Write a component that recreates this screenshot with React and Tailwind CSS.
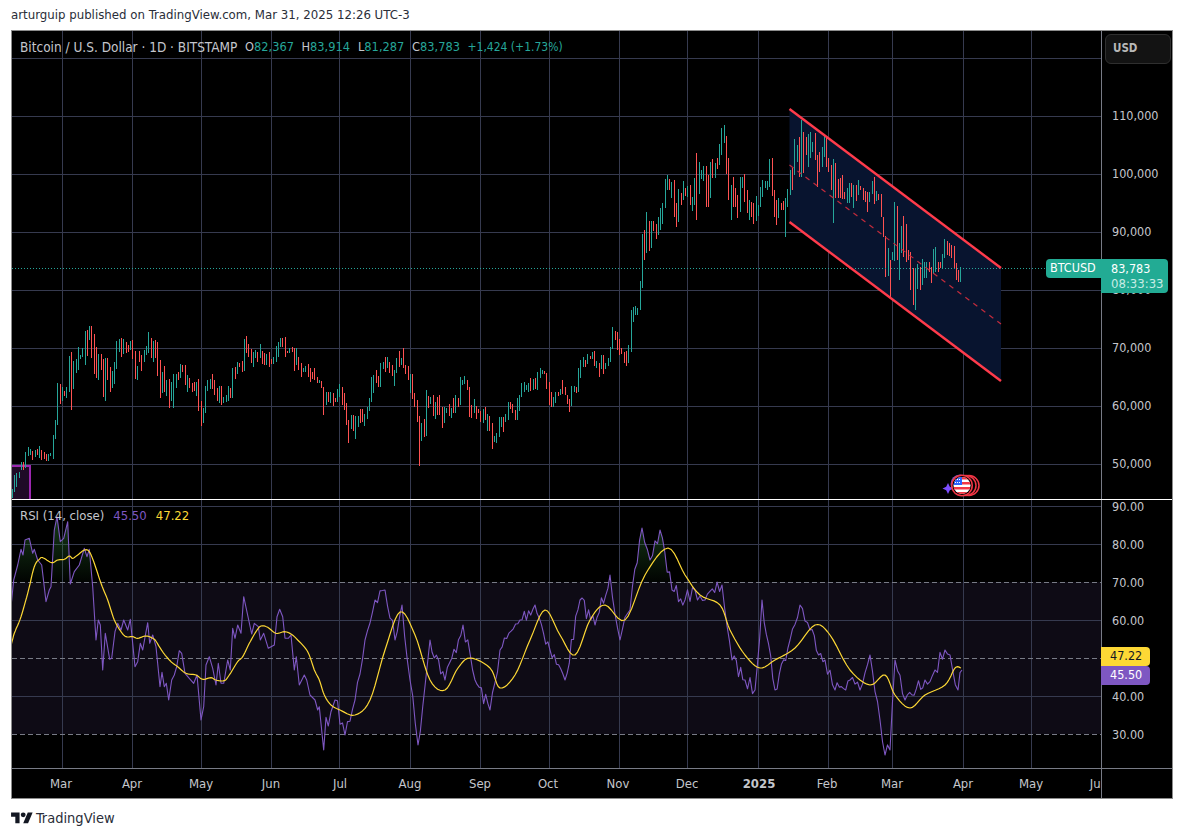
import React from "react";

const parse = (s, ox, oy) =>
  s.trim().split(";").filter(Boolean).map((r) => {
    const [X, T, B, c] = r.trim().split(" ");
    return { x: Math.floor(ox + X / 3), t: oy + T / 3, b: oy + B / 3, c };
  });

const z4 = "37 148 175 t;43 105 155 t;49 100 140 t;58 95 115 t";
const z7 = "65 425 450 t;71 425 450 r;76 395 445 t;85 380 408 t;91 388 405 t;97 393 420 r;106 390 412 t;112 387 405 r;118 378 415 t;124 390 420 r;133 395 418 r;139 402 423 r;145 402 422 t;151 398 408 t;160 345 417 t;166 300 357 t;172 190 315 t;181 192 252 r;187 200 243 t;193 213 228 r;199 200 235 t;208 108 215 t;214 96 270 r;220 122 207 t;229 116 158 t;235 80 150 t;241 105 118 t;247 83 110 t;256 32 135 t;262 30 108 r;268 18 60 t;274 18 115 r;283 42 162 r;289 80 175 r;295 102 180 t;304 102 150 r;310 117 230 r;316 115 243 t;322 113 180 r;331 140 215 r;337 152 205 t;343 125 192 t;349 63 148 t;358 58 95 t;364 55 110 r;370 57 102 t;379 65 100 r;385 76 95 r;391 62 90 t;397 60 117 r;406 92 178 r;412 138 180 t;418 92 125 r;424 105 153 r;433 90 125 t;439 78 105 t;445 36 100 t;454 55 115 r;460 62 125 t;466 60 115 r;472 65 168 r;481 120 233 r;487 155 220 t;493 138 215 r;499 180 228 t;508 178 263 r;514 185 243 t;520 162 263 t;529 162 205 t;535 155 180 r;541 132 175 t;547 135 155 r;556 135 195 r;562 165 215 t;568 173 205 r;577 190 215 r;583 185 212 r;589 185 228 t;595 178 273 r;604 243 318 r;610 265 310 t;616 198 278 t;622 180 212 t;631 177 208 t;637 162 208 r;643 180 225 r;652 205 243 r;658 197 250 t;664 197 255 r;670 232 250 t;679 225 245 t;685 198 243 t;691 205 235 r;697 145 235 t;706 140 177 r;712 127 163 t;718 128 140 r;727 122 155 r;733 57 152 t;739 48 100 r;745 72 110 r;754 88 130 r;760 95 140 t;766 90 115 t;772 95 125 r;781 72 115 t;787 92 132 r;793 100 135 r;799 102 135 t;808 95 140 r;814 118 133 r;820 110 132 t;829 78 125 t;835 65 110 t;841 53 82 t;847 53 80 r;856 50 110 r;862 93 98 r;868 85 100 t;877 82 97 r;883 85 152 r;889 85 135 t;895 110 150 r;904 128 170 r;910 145 155 t;916 138 155 t;925 132 170 r;931 145 185 r;937 155 178 r;943 145 180 r;952 170 190 r;958 180 190 t;964 183 205 r;970 200 285 r;979 217 255 t;985 217 245 r;991 217 250 t;1000 220 258 r;1006 235 245 r;1012 207 245 t;1018 193 230 t;1027 200 255 r;1033 220 270 r;1039 250 315 r;1045 300 368 r;1054 285 328 t;1060 285 332 r;1066 288 357 t;1075 288 320 t;1081 267 308 r;1087 267 305 r;1093 282 318 t;1102 260 298 t;1108 235 272 t;1114 170 245 t;1120 165 218 t;1129 150 188 r;1135 168 200 r;1141 128 200 t;1150 125 148 t;1156 110 155 r;1162 110 145 t;1168 125 160 r;1177 135 167 r;1183 150 198 t;1189 113 160 t;1198 93 140 r";
const z9 = "4 325 345 t;10 295 353 r;16 345 373 r;25 348 390 r;31 372 428 t;37 372 447 r;43 430 470 r;52 450 515 r;58 498 647 r;64 518 573 t;73 507 560 r;79 420 557 t;85 438 473 r;91 442 462 t;100 435 497 r;106 455 506 t;112 442 495 r;118 435 495 r;127 470 533 r;133 472 518 t;139 474 488 t;148 462 497 r;154 474 503 t;160 444 490 r;166 435 488 t;175 444 470 r;181 380 465 t;187 390 405 t;193 378 402 t;202 390 420 r;208 410 500 r;214 465 503 r;223 447 490 t;229 468 506 r;235 476 490 r;241 483 515 r;250 476 518 t;256 471 510 r;262 492 542 t;268 498 543 r;277 518 597 r;283 558 577 t;289 548 578 t;298 502 560 t;304 502 530 t;310 502 545 r;316 492 516 t;325 456 510 t;331 456 477 r;337 462 490 r;346 480 510 r;352 444 510 t;358 435 483 t;364 400 440 t;373 396 427 t;379 405 420 t;385 400 426 t;391 384 423 r;400 388 420 t;406 384 418 r;412 366 420 t;421 354 384 t;427 360 371 t;433 363 371 r;439 370 417 r;448 396 465 r;454 426 470 r;460 441 470 t;466 426 458 t;475 426 438 r;481 417 434 t;487 390 433 r;496 411 435 r;502 435 462 r;508 447 485 r;514 408 468 t;523 408 426 t;529 411 430 r;535 354 426 t;541 330 384 t;550 321 350 t;556 330 350 r;562 312 342 t;571 318 327 r;577 306 327 t;583 303 347 r;589 333 353 t;598 339 380 r;604 315 357 t;610 315 372 r;616 339 357 t;625 324 348 t;631 291 336 t;637 231 297 t;646 243 270 r;652 246 300 r;658 267 315 r;664 294 312 r;673 306 339 r;679 303 347 r;685 285 339 t;694 180 305 t;700 171 216 t;706 168 195 t;712 174 195 t;721 93 180 t;727 -48 113 t";
const z8 = "133 360 450 r;139 307 428 t;148 333 422 r;154 333 415 t;160 333 363 r;169 342 387 r;175 322 375 t;181 295 360 t;187 280 342 t;196 208 293 t;202 195 240 t;208 207 240 r;214 215 263 t;223 210 320 r;229 280 350 r;235 237 335 t;244 250 285 r;250 212 270 t;256 233 258 r;262 229 260 t;271 225 285 r;277 260 302 t;283 205 285 t;289 128 330 r;298 155 252 t;304 180 207 t;310 168 213 t;320 168 290 r;326 195 290 r;331 155 265 t;337 147 205 r;346 158 205 t;352 145 178 r;358 102 165 t;364 55 135 t;373 45 100 t;379 78 192 r;385 143 270 r;394 225 330 t;400 200 290 r;406 235 290 r;412 255 323 r;421 200 305 t;427 200 235 t;433 193 275 r;442 240 308 r;448 270 330 t;454 275 320 r;460 280 342 r;469 258 333 t;475 285 318 t";
const z2 = "0 290 350 t;7 270 320 t;15 272 295 t;21 272 300 t;28 208 290 t;36 205 318 r;44 300 380 r;50 330 405 r;55 325 385 t;64 338 360 r;70 332 360 r;76 325 440 t;82 297 350 t;90 240 315 t;97 235 300 r;103 147 255 t;111 165 215 t;118 140 260 r;124 90 262 t;131 125 250 r;138 142 195 r;144 132 230 t;150 127 205 t;158 155 185 t;165 130 210 r;172 195 290 r;179 185 245 r;186 170 230 t;193 138 200 t;199 145 230 r;206 205 245 r;213 225 300 r;220 208 398 t;226 218 325 r;236 267 325 r;242 265 325 r;248 255 328 r;254 305 328 r;262 295 340 t;268 280 340 t;274 280 322 r;280 285 355 t;288 285 332 r;295 270 315 t;302 288 300 r;310 293 330 r;316 302 335 r;322 307 365 r;329 305 335 t;337 272 313 t;343 260 342 r;350 302 332 t;356 312 330 r;364 313 380 r;370 380 440 r;376 438 560 r;384 475 558 t;391 510 628 r;398 487 510 t;404 335 512 t;411 348 510 r;418 460 570 t;424 408 490 t;430 378 500 r;438 403 515 r;445 480 510 r;452 486 600 r;460 533 645 r;466 533 660 t;472 523 598 t;480 530 600 r;487 507 585 t;493 517 565 t;500 515 565 t;507 515 545 r;514 530 578 r;520 478 552 t;527 470 545 t;536 515 545 r;542 517 535 r;548 492 535 t;554 448 505 t;562 452 495 r;569 458 497 r;575 465 505 r;583 468 535 r;590 520 570 r;596 540 575 r;602 532 575 t";

const bars = [
  ...parse(z4, 0, 440),
  ...parse(z7, 0, 320),
  ...parse(z9, 400, 250),
  ...parse(z8, 600, 110),
  ...parse(z2, 760, 90),
];

const pair = (s) => s.trim().split(/\s+/).map((p) => p.split(",").map(Number));
const purpleA = pair("0,290 8,210 20,165 30,118 36,135 42,90 55,85 65,130 70,118 80,150 92,165 105,275 115,240 120,230 130,60 138,20 148,95 158,85 170,35 178,222 190,185 205,165 220,115 228,140 235,118 245,230 255,390 262,330 268,345 275,480 283,370 296,448 302,445 312,365 320,340 330,360 338,330 350,360 358,328 372,470 380,455 388,400 395,420 410,338 416,400 425,375 435,410 447,530 453,487 460,530 466,520 473,570 482,510 490,495 497,470 505,422 512,430 522,490 535,505 548,520 558,495 570,630 578,590 585,465 595,440 605,475 615,525 622,460 630,520 638,520 650,450 658,480 665,355 672,385 680,345 690,370 698,260 722,372 730,340 742,350 748,390 758,370 772,415 790,405 798,320 806,298 815,320 822,385 832,385 840,375 850,480 856,440 865,525 880,495 887,510 897,555 912,570 920,600 925,590 938,720 945,622 952,648 960,605").map(([x, y]) => [11 + x / 3, 510 + y / 3]);
const purpleB = pair("335,700 345,735 355,700 365,640 375,600 385,590 395,640 402,605 410,680 418,745 430,640 445,680 463,625 475,680 490,710 500,650 520,620 535,605 550,650 565,680 580,600 595,625 610,575 620,640 630,610 642,528 650,560 660,530 672,590 685,600 695,590 705,600 722,585 732,660 745,680 755,690 762,600 775,690 790,640 800,605 810,630 825,660 835,690 850,680 860,690 870,655 880,720 885,755 890,750 895,660 905,700 912,695 925,680 935,670 945,650 950,655 958,690 962,670");
let seed = 7;
const rnd = () => { seed = (seed * 16807) % 2147483647; return seed / 2147483647 - 0.5; };
const jitter = [];
for (let i = 0; i < purpleB.length - 1; i++) {
  const [x0, y0] = purpleB[i];
  const [x1, y1] = purpleB[i + 1];
  const n = Math.max(1, Math.round((x1 - x0) / 2.3));
  for (let k = 0; k < n; k++) {
    const f = k / n;
    const noise = k === 0 ? 0 : rnd() * 16;
    jitter.push([x0 + (x1 - x0) * f, y0 + (y1 - y0) * f + noise]);
  }
}
jitter.push(purpleB[purpleB.length - 1]);
const purple = [...purpleA, ...jitter];
const yellowA = pair("0,408 10,370 30,320 50,250 70,170 85,148 95,143 122,158 140,150 160,148 175,138 185,145 200,135 220,120 235,125 250,160 270,220 290,270 310,330 330,365 345,380 365,380 380,385 405,378 430,388 445,410 460,432 480,455 500,470 525,490 555,495 575,508 600,503 615,510 640,512 655,495 680,455 695,440 715,400 735,365 750,348 770,352 795,370 820,365 840,372 860,390 890,425 910,480 925,510 940,555 960,585").map(([x, y]) => [11 + x / 3, 510 + y / 3]);
const yellowB = pair("340,710 355,715 370,700 385,650 400,612 415,635 430,680 445,690 458,668 470,658 490,668 500,688 515,675 530,640 545,610 560,635 575,655 590,620 605,605 625,620 645,575 668,548 685,575 700,595 720,605 730,630 745,655 760,668 775,660 795,648 815,625 830,635 850,670 870,685 885,675 895,695 910,708 925,695 945,685 955,668 961,668");
const smooth = (a) => {
  const out = [];
  for (let i = 0; i < a.length - 1; i++) {
    const p0 = a[Math.max(0, i - 1)];
    const p1 = a[i];
    const p2 = a[i + 1];
    const p3 = a[Math.min(a.length - 1, i + 2)];
    for (let k = 0; k < 6; k++) {
      const t = k / 6;
      const cr = (j) =>
        0.5 * (2 * p1[j] + (p2[j] - p0[j]) * t + (2 * p0[j] - 5 * p1[j] + 4 * p2[j] - p3[j]) * t * t + (3 * p1[j] - p0[j] - 3 * p2[j] + p3[j]) * t * t * t);
      out.push([cr(0), cr(1)]);
    }
  }
  out.push(a[a.length - 1]);
  return out;
};
const yellow = smooth([...yellowA, ...yellowB]);
const pts = (a) => a.map(([x, y]) => `${x.toFixed(1)},${y.toFixed(1)}`).join(" ");

const vLines = [62, 132, 201, 271, 339, 410, 480, 549, 619, 687, 758, 828, 892, 963, 1031];
const priceY = [58, 116, 174, 232, 290, 348, 406, 464];
const rsiY = [506, 544, 620, 696];
const rsiDash = [582, 658, 734];
const prices = ["110,000", "100,000", "90,000", "80,000", "70,000", "60,000", "50,000"];
const rsiLabels = ["80.00", "70.00", "60.00", "50.00", "40.00", "30.00"];
const months = [["Mar", 61], ["Apr", 132], ["May", 201], ["Jun", 271], ["Jul", 340], ["Aug", 410], ["Sep", 480], ["Oct", 548], ["Nov", 618], ["Dec", 687], ["2025", 759], ["Feb", 827], ["Mar", 892], ["Apr", 963], ["May", 1031], ["Jun", 1099]];

const Grid = ({ ys, y1, y2 }) => (
  <g stroke="#363a4f" strokeWidth="1" shapeRendering="crispEdges">
    {vLines.map((x) => <line key={x} x1={x + 0.5} x2={x + 0.5} y1={y1} y2={y2} />)}
    {ys.map((y) => <line key={y} x1="12" x2="1101" y1={y + 0.5} y2={y + 0.5} />)}
  </g>
);

const MainChart = () => (
  <svg className="block w-[1089px] h-[468px] shrink-0" viewBox="12 31 1089 468">
    <Grid ys={priceY} y1={31} y2={499} />
    <rect x="12" y="466" width="18" height="33" fill="#1f0a26" />
    <path d="M12 466H30V499" fill="none" stroke="#9c27b0" strokeWidth="2" />
    <polygon points="789.5,109 1001,268 1001,381 789.5,222" fill="#08142f" />
    <g shapeRendering="crispEdges">
      {bars.map((b, i) => (
        <rect key={i} x={b.x} y={b.t} width="1" height={b.b - b.t} fill={b.c === "t" ? "#26a69a" : "#ff5252"} />
      ))}
    </g>
    <line x1="12" x2="1046" y1="268.5" y2="268.5" stroke="#26a69a" strokeWidth="1" strokeDasharray="1 2" />
    <line x1="789.5" y1="165" x2="1001" y2="324" stroke="#c22b3c" strokeWidth="1.2" strokeDasharray="5 5" />
    <line x1="789.5" y1="109" x2="1001" y2="268" stroke="#ff3b4b" strokeWidth="2.4" />
    <line x1="789.5" y1="222" x2="1001" y2="381" stroke="#ff3b4b" strokeWidth="2.4" />
    <defs>
      <clipPath id="flag"><circle cx="962" cy="485.5" r="8.5" /></clipPath>
    </defs>
    <path d="M948 483L949.8 486.7L953.5 488.5L949.8 490.3L948 494L946.2 490.3L942.5 488.5L946.2 486.7z" fill="#7c4dff" />
    <circle cx="960" cy="484" r="9.5" fill="#7e57c2" />
    <circle cx="969" cy="485.5" r="10" fill="#000" stroke="#f23645" strokeWidth="1.5" />
    <circle cx="966" cy="485.5" r="10" fill="#000" stroke="#f23645" strokeWidth="1.5" />
    <circle cx="962" cy="485.5" r="11" fill="#f23645" />
    <circle cx="962" cy="485.5" r="9.5" fill="#000" />
    <g clipPath="url(#flag)">
      <rect x="953" y="477" width="18" height="18" fill="#fff" />
      <rect x="953" y="477" width="18" height="2.5" fill="#f23645" />
      <rect x="953" y="482" width="18" height="2.5" fill="#f23645" />
      <rect x="953" y="487" width="18" height="2.5" fill="#f23645" />
      <rect x="953" y="492" width="18" height="3" fill="#f23645" />
      <rect x="953" y="477" width="9" height="8" fill="#2962ff" />
      <g fill="#fff">
        <rect x="955" y="479" width="1" height="1" /><rect x="957" y="479" width="1" height="1" /><rect x="959" y="479" width="1" height="1" />
        <rect x="955" y="482" width="1" height="1" /><rect x="957" y="482" width="1" height="1" /><rect x="959" y="482" width="1" height="1" />
      </g>
    </g>
  </svg>
);

const RsiChart = () => (
  <svg className="block w-[1089px] h-[268px] shrink-0" viewBox="12 500 1089 268">
    <rect x="12" y="582" width="1089" height="152" fill="#0e0b15" />
    <Grid ys={rsiY} y1={500} y2={768} />
    <defs>
      <linearGradient id="ob" x1="0" y1="506" x2="0" y2="582" gradientUnits="userSpaceOnUse">
        <stop offset="0" stopColor="#2e7d32" stopOpacity="0.55" />
        <stop offset="1" stopColor="#2e7d32" stopOpacity="0.03" />
      </linearGradient>
      <clipPath id="above"><rect x="12" y="500" width="1089" height="82.5" /></clipPath>
    </defs>
    <polygon points={`12,582 ${pts(purple)} 962,582`} fill="url(#ob)" clipPath="url(#above)" />
    <g stroke="#787b86" strokeWidth="1" strokeDasharray="5 3" shapeRendering="crispEdges">
      {rsiDash.map((y) => <line key={y} x1="12" x2="1101" y1={y + 0.5} y2={y + 0.5} />)}
    </g>
    <polyline points={pts(purple)} fill="none" stroke="#7e57c2" strokeWidth="1.1" strokeLinejoin="round" />
    <polyline points={pts(yellow)} fill="none" stroke="#fdd835" strokeWidth="1.2" strokeLinejoin="round" />
  </svg>
);

const Ohlc = ({ l, v, className }) => (
  <span className={`shrink-0 whitespace-nowrap text-[12.7px] ${className}`}>{l}<span className="text-[#26a69a]">{v}</span></span>
);

export default function App() {
  return (
    <div className="w-[1184px] h-[838px] bg-white flex flex-col overflow-hidden font-['DejaVu_Sans_Condensed','DejaVu_Sans',sans-serif]">
      <div className="h-[30px] pl-[11px] flex items-center text-[13.1px] text-[#2a2e39] shrink-0">
        arturguip published on TradingView.com, Mar 31, 2025 12:26 UTC-3
      </div>
      <div className="ml-[11px] w-[1162px] h-[769px] shrink-0 bg-black border border-[#8c8c8c] flex flex-col">
        <div className="relative h-[468px] flex shrink-0">
          <MainChart />
          <div className="flex-1 border-l border-[#787b86] pt-[56px] text-[12.5px] text-[#c4c6cc]">
            {prices.map((p) => (
              <div key={p} className="h-[58px] pl-[10px] flex items-center">{p}</div>
            ))}
          </div>
          <div className="absolute left-[8px] top-[8px] flex items-center h-[16px] text-[#c4c6cc] whitespace-nowrap">
            <span className="w-[225px] shrink-0 text-[13.5px]">Bitcoin / U.S. Dollar · 1D · BITSTAMP</span>
            <Ohlc l="O" v="82,367" className="w-[56.5px]" />
            <Ohlc l="H" v="83,914" className="w-[56.5px]" />
            <Ohlc l="L" v="81,287" className="w-[54px]" />
            <Ohlc l="C" v="83,783" className="w-[55.5px]" />
            <span className="text-[12px] text-[#26a69a]">+1,424 (+1.73%)</span>
          </div>
          <div className="absolute left-[1093px] top-[3px] w-[66px] h-[30px] rounded-md bg-[#131313] border border-[#2f2f2f] flex items-center pl-[7px] text-[11.5px] font-bold text-[#b8b8b8]">
            USD
          </div>
          <div className="absolute left-[1034px] top-[228px] w-[55px] h-[19px] rounded-l-sm bg-[#22ab94] text-white text-[12.5px] flex items-center pl-[4px]">
            BTCUSD
          </div>
          <div className="absolute left-[1089px] top-[228px] w-[67px] h-[34px] rounded-r-sm bg-[#22ab94] text-[12.5px] leading-[15px] pt-[2px] pl-[10px]">
            <div className="text-white">83,783</div>
            <div className="text-[#c9ebe5] text-[13px]">08:33:33</div>
          </div>
        </div>
        <div className="h-px bg-white shrink-0" />
        <div className="relative h-[268px] flex shrink-0 overflow-hidden">
          <RsiChart />
          <div className="flex-1 border-l border-[#787b86] text-[12.5px] text-[#c4c6cc]">
            <div className="h-[15px] mb-[11.5px] pl-[10px] flex items-center">90.00</div>
            {rsiLabels.map((p) => (
              <div key={p} className="h-[38px] pl-[10px] flex items-center">{p}</div>
            ))}
          </div>
          <div className="absolute left-[8px] top-[8px] h-[16px] flex items-center gap-[9px] text-[13px] text-[#c4c6cc] whitespace-nowrap">
            <span>RSI (14, close)</span>
            <span className="text-[#7e57c2]">45.50</span>
            <span className="text-[#fdd835]">47.22</span>
          </div>
          <div className="absolute left-[1089px] top-[147px] w-[49px] h-[19px] bg-[#fdd835] rounded-r-sm text-[#131722] text-[12.5px] flex items-center pl-[9px]">47.22</div>
          <div className="absolute left-[1089px] top-[166px] w-[49px] h-[19px] bg-[#7e57c2] rounded-r-sm text-white text-[12.5px] flex items-center pl-[9px]">45.50</div>
        </div>
        <div className="h-[30px] flex shrink-0 border-t border-[#787b86] text-[13px] text-[#c4c6cc]">
          <div className="w-[1089px] shrink-0 flex overflow-hidden">
            {months.map(([m, c], i) => (
              <div
                key={m + c}
                style={{ marginLeft: i === 0 ? c - 12 - 30 : c - months[i - 1][1] - 60 }}
                className={`w-[60px] shrink-0 flex items-center justify-center ${m === "2025" ? "font-bold" : ""}`}
              >
                {m}
              </div>
            ))}
          </div>
          <div className="flex-1 border-l border-[#787b86]" />
        </div>
      </div>
      <div className="flex-1 pl-[11px] flex items-center gap-[3px] text-[#2a2e39]">
        <svg className="w-[22px] h-[17px]" viewBox="0 0 36 28" fill="#131722">
          <path d="M14 22H7V11H0V4h14v18zM28 22h-8l7.5-18h8L28 22z" />
          <circle cx="20" cy="8" r="4" />
        </svg>
        <span className="text-[14.5px]">TradingView</span>
      </div>
    </div>
  );
}
